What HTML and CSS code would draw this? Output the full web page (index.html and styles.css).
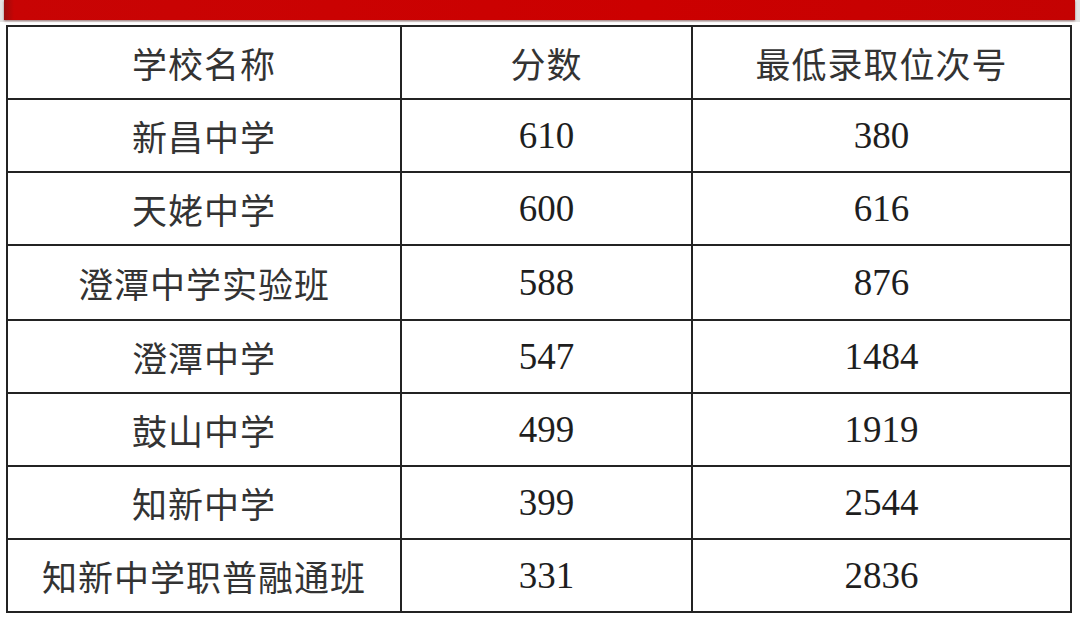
FILE: index.html
```html
<!DOCTYPE html>
<html lang="zh">
<head>
<meta charset="utf-8">
<link rel="stylesheet" href="styles.css">
</head>
<body>
<div class="top">
  <div class="redbar"></div>
</div>
<table class="scores">
  <colgroup>
    <col class="c1"><col class="c2"><col class="c3">
  </colgroup>
  <thead>
    <tr><th>学校名称</th><th>分数</th><th>最低录取位次号</th></tr>
  </thead>
  <tbody>
    <tr><td class="name">新昌中学</td><td class="num">610</td><td class="num">380</td></tr>
    <tr><td class="name">天姥中学</td><td class="num">600</td><td class="num">616</td></tr>
    <tr class="tall"><td class="name">澄潭中学实验班</td><td class="num">588</td><td class="num">876</td></tr>
    <tr><td class="name">澄潭中学</td><td class="num">547</td><td class="num">1484</td></tr>
    <tr><td class="name">鼓山中学</td><td class="num">499</td><td class="num">1919</td></tr>
    <tr><td class="name">知新中学</td><td class="num">399</td><td class="num">2544</td></tr>
    <tr><td class="name">知新中学职普融通班</td><td class="num">331</td><td class="num">2836</td></tr>
  </tbody>
</table>
</body>
</html>
```

FILE: styles.css
```css
html, body {
  margin: 0;
  padding: 0;
  background: #ffffff;
  width: 1080px;
  height: 618px;
  overflow: hidden;
}
.top {
  height: 22px;
  background: #e4e4e4;
  padding: 0 5px 0 4px;
  box-sizing: border-box;
}
.redbar {
  height: 20px;
  background: linear-gradient(90deg, #9a0c0c 0px, #c80404 10px, #cc0000 60%, #c40202 100%);
  box-shadow: 0 1px 2px rgba(80, 0, 0, 0.5);
}
.scores {
  margin: 3px 0 0 6px;
  border-collapse: collapse;
  width: 1064px;
  table-layout: fixed;
}
.c1 { width: 394px; }
.c2 { width: 291px; }
.c3 { width: 379px; }
.scores th, .scores td {
  border: 2px solid #232323;
  height: 71px;
  padding: 0;
  text-align: center;
  vertical-align: middle;
  color: #2e2e2e;
  font-weight: normal;
}
.scores tr.tall td {
  height: 73px;
}
.scores th, .scores td.name {
  font-family: "Noto Sans CJK SC", "Noto Sans", sans-serif;
  font-weight: 400;
  font-size: 35px;
  letter-spacing: 1px;
  color: #333333;
}
.scores td.num {
  font-family: "Liberation Serif", "Times New Roman", serif;
  font-size: 37px;
  color: #1e1e1e;
}
```
